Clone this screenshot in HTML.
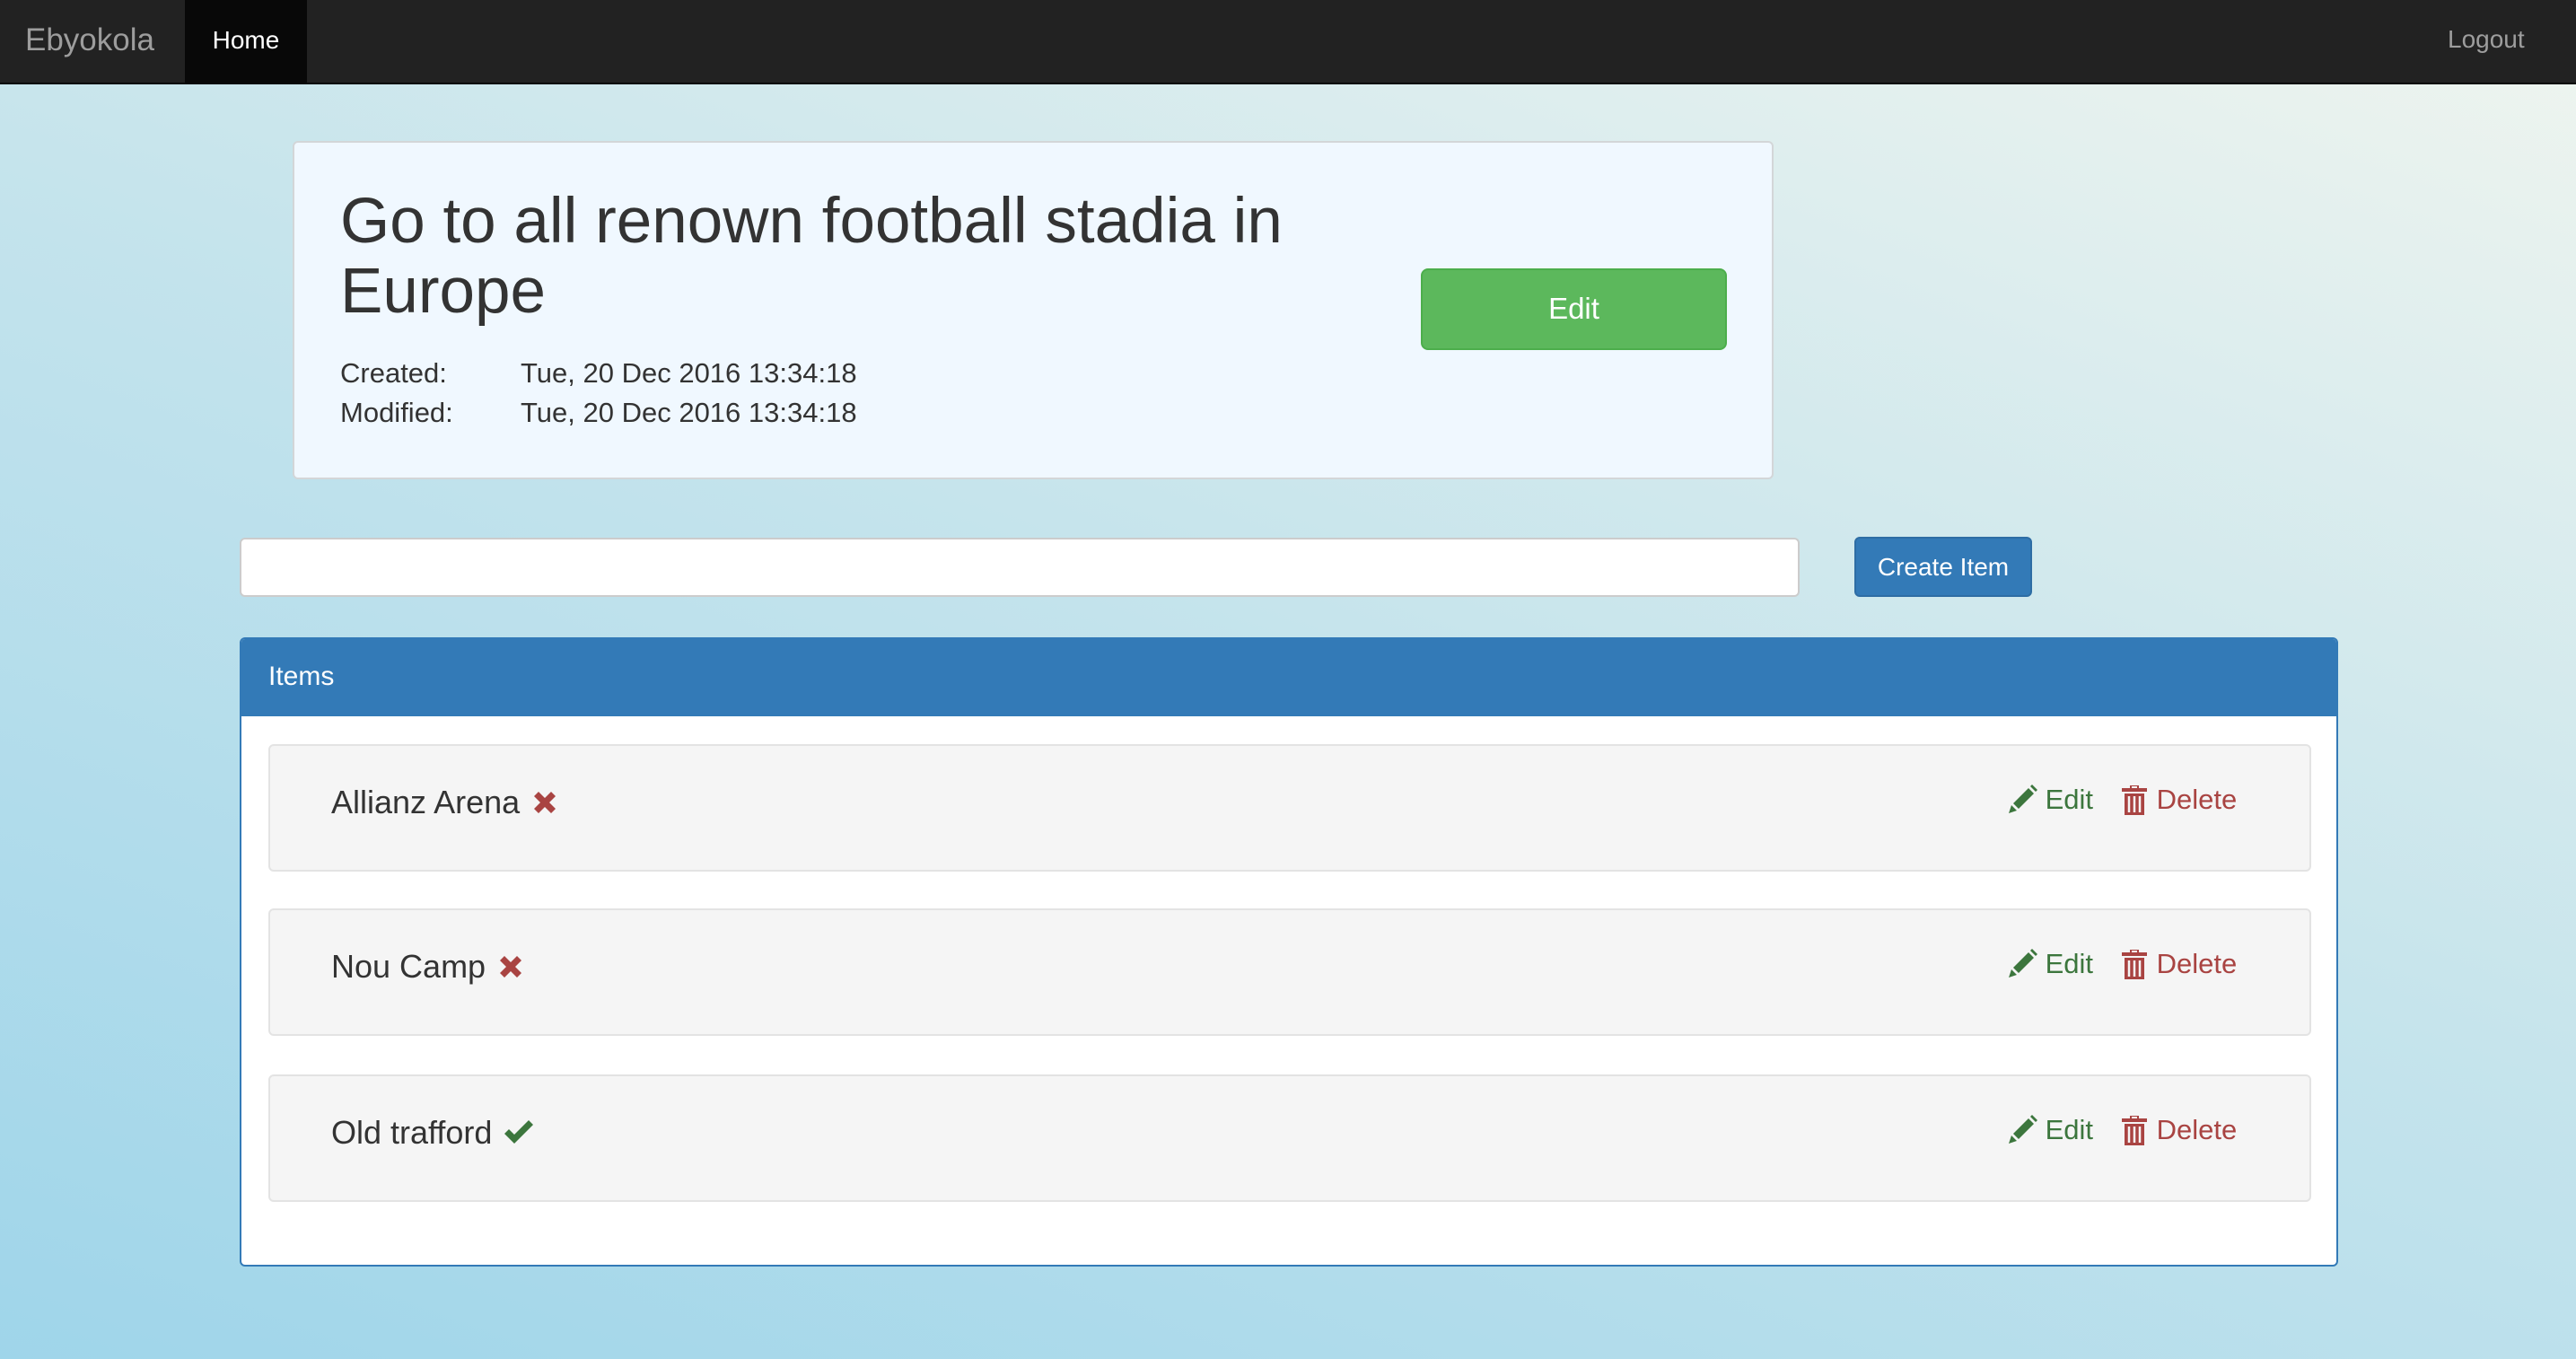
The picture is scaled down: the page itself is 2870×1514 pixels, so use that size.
<!DOCTYPE html>
<html><head><meta charset="utf-8"><style>
*{box-sizing:border-box;margin:0;padding:0}
html,body{width:2870px;height:1514px;overflow:hidden}
body{font-family:"Liberation Sans",Arial,sans-serif;color:#333;background:linear-gradient(20deg,#9fd5ea 0%,#c3e3ec 50%,#f0f5ef 100%);position:relative}
.nav{position:absolute;left:0;top:0;width:2870px;height:94px;background:#222;border-bottom:2px solid #080808}
.brand{position:absolute;left:28px;top:25px;font-size:35px;color:#9d9d9d;line-height:40px}
.home{position:absolute;left:206px;top:0;width:136px;height:92px;background:#080808;color:#fff;font-size:28px;line-height:90px;text-align:center}
.logout{position:absolute;left:2727px;top:0;font-size:28px;color:#9d9d9d;line-height:88px}
.card{position:absolute;left:326px;top:157px;width:1650px;height:377px;background:#f0f8ff;border:2px solid #d3d6d8;border-radius:6px}
.title{position:absolute;left:51px;top:49px;font-size:71px;line-height:78px;color:#333;width:1220px}
.meta{position:absolute;left:51px;top:235px;font-size:31px;line-height:44px}
.meta span{display:inline-block;width:201px}
.editbig{position:absolute;left:1255px;top:140px;width:341px;height:91px;background:#5cb85c;border:2px solid #4cae4c;border-radius:8px;color:#fff;font-size:33px;line-height:86px;text-align:center}
.input{position:absolute;left:267px;top:599px;width:1738px;height:66px;background:#fff;border:2px solid #ccc;border-radius:6px}
.create{position:absolute;left:2066px;top:598px;width:198px;height:67px;background:#337ab7;border:2px solid #2e6da4;border-radius:6px;color:#fff;font-size:28px;line-height:64px;text-align:center}
.panel{position:absolute;left:267px;top:710px;width:2338px;height:701px;background:#fff;border:2px solid #337ab7;border-radius:6px;overflow:hidden}
.ph{height:86px;background:#337ab7;color:#fff;font-size:30px;line-height:84px;padding-left:30px}
.row{position:absolute;left:30px;width:2276px;height:142px;background:#f5f5f5;border:2px solid #e3e3e3;border-radius:6px}
.name{position:absolute;left:68px;top:41px;font-size:36px;line-height:44px;color:#333;display:flex;align-items:center}
.name svg{margin-left:12px}
.acts{position:absolute;left:1935px;top:38px;font-size:31px;line-height:44px;display:flex;align-items:center}
.ed{color:#3c763d;display:flex;align-items:center}
.dl{color:#a94442;display:flex;align-items:center;margin-left:30px}
</style></head><body>
<div class="nav"><div class="brand">Ebyokola</div><div class="home">Home</div><div class="logout">Logout</div></div>
<div class="card">
<div class="title">Go to all renown football stadia in Europe</div>
<div class="meta"><div><span>Created:</span>Tue, 20 Dec 2016 13:34:18</div><div><span>Modified:</span>Tue, 20 Dec 2016 13:34:18</div></div>
<div class="editbig">Edit</div>
</div>
<div class="input"></div>
<div class="create">Create Item</div>
<div class="panel">
<div class="ph">Items</div>
<div class="row" style="top:117px"><div class="name">Allianz Arena<svg width="32" height="32" viewBox="0 0 32 32"><path d="M4 9l5-5 7 7 7-7 5 5-7 7 7 7-5 5-7-7-7 7-5-5 7-7z" fill="#a94442"/></svg></div>
<div class="acts"><span class="ed"><svg width="34" height="34" viewBox="0 0 34 34"><path d="M2 32l3-9 6 6z M7 21l17-17 6 6-17 17z M26 2l2-2 6 6-2 2z" fill="#3c763d"/></svg>&nbsp;Edit</span><span class="dl"><svg width="32" height="36" viewBox="0 0 32 36"><path d="M11 2h10v3h9v4H2V5h9z M5 11h22v24H5z" fill="#a94442"/><path d="M10 14v18M16 14v18M22 14v18" stroke="#f5f5f5" stroke-width="2.5"/><path d="M13 3h6v2h-6z" fill="#f5f5f5"/></svg>&nbsp;Delete</span></div></div>
<div class="row" style="top:300px"><div class="name">Nou Camp<svg width="32" height="32" viewBox="0 0 32 32"><path d="M4 9l5-5 7 7 7-7 5 5-7 7 7 7-5 5-7-7-7 7-5-5 7-7z" fill="#a94442"/></svg></div>
<div class="acts"><span class="ed"><svg width="34" height="34" viewBox="0 0 34 34"><path d="M2 32l3-9 6 6z M7 21l17-17 6 6-17 17z M26 2l2-2 6 6-2 2z" fill="#3c763d"/></svg>&nbsp;Edit</span><span class="dl"><svg width="32" height="36" viewBox="0 0 32 36"><path d="M11 2h10v3h9v4H2V5h9z M5 11h22v24H5z" fill="#a94442"/><path d="M10 14v18M16 14v18M22 14v18" stroke="#f5f5f5" stroke-width="2.5"/><path d="M13 3h6v2h-6z" fill="#f5f5f5"/></svg>&nbsp;Delete</span></div></div>
<div class="row" style="top:485px"><div class="name">Old trafford<svg width="36" height="32" viewBox="0 0 36 32"><path d="M2 17l5-5 6 6L29 2l5 5-21 21z" fill="#3c763d"/></svg></div>
<div class="acts"><span class="ed"><svg width="34" height="34" viewBox="0 0 34 34"><path d="M2 32l3-9 6 6z M7 21l17-17 6 6-17 17z M26 2l2-2 6 6-2 2z" fill="#3c763d"/></svg>&nbsp;Edit</span><span class="dl"><svg width="32" height="36" viewBox="0 0 32 36"><path d="M11 2h10v3h9v4H2V5h9z M5 11h22v24H5z" fill="#a94442"/><path d="M10 14v18M16 14v18M22 14v18" stroke="#f5f5f5" stroke-width="2.5"/><path d="M13 3h6v2h-6z" fill="#f5f5f5"/></svg>&nbsp;Delete</span></div></div>
</div>
</body></html>
